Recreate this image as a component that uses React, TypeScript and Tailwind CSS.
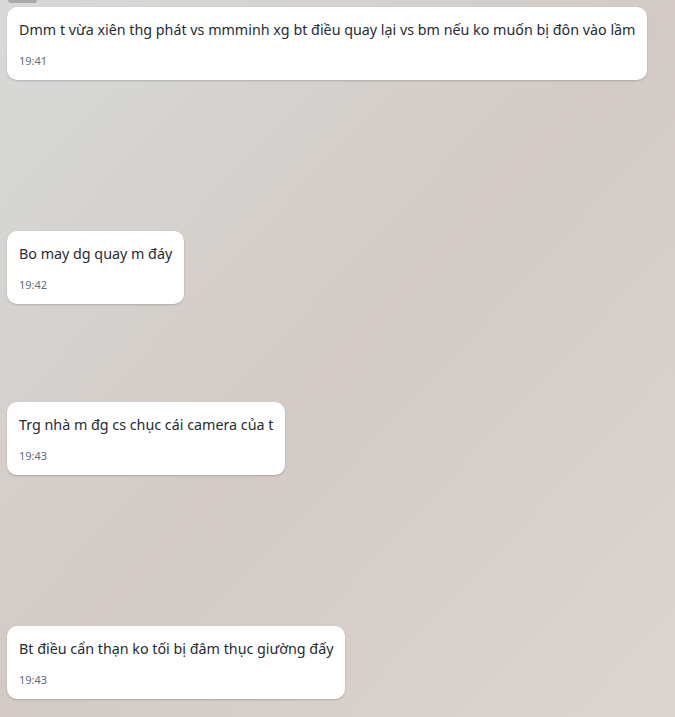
import React from "react";

type Message = {
  id: number;
  text: string;
  time: string;
  gap: string;
};

const messages: Message[] = [
  {
    id: 1,
    text: "Dmm t vừa xiên thg phát vs mmminh xg bt điều quay lại vs bm nếu ko muốn bị đôn vào lầm",
    time: "19:41",
    gap: "mt-[4px]",
  },
  { id: 2, text: "Bo may dg quay m đáy", time: "19:42", gap: "mt-[151px]" },
  {
    id: 3,
    text: "Trg nhà m đg cs chục cái camera của t",
    time: "19:43",
    gap: "mt-[98px]",
  },
  {
    id: 4,
    text: "Bt điều cẩn thạn ko tối bị đâm thục giường đấy",
    time: "19:43",
    gap: "mt-[151px]",
  },
];

function Bubble({ text, time, gap }: Message) {
  return (
    <div
      className={`${gap} self-start rounded-[10px] bg-white pl-3 pr-3 pt-3 pb-[11px] shadow-[0_1px_2px_rgba(0,0,0,0.18)]`}
    >
      <p className="text-[14.3px] leading-[22px] text-[#262b33] whitespace-nowrap">
        {text}
      </p>
      <p className="mt-3 text-[11px] leading-4 text-[#5c6c80]">{time}</p>
    </div>
  );
}

export default function App() {
  return (
    <main
      className="h-[717px] w-[675px] overflow-hidden bg-gradient-to-br from-[#d7dad8] via-[#d3cac5] to-[#ddd5cf]"
      style={{ fontFamily: '"Noto Sans", "Open Sans", sans-serif' }}
    >
      <div className="flex flex-col px-[7px]">
        {/* tail of the previous item, scrolled off the top */}
        <div className="ml-[1px] h-[3px] w-[29px] rounded-b-[6px] bg-[#a9abaa]" />
        {messages.map((m) => (
          <Bubble key={m.id} {...m} />
        ))}
      </div>
    </main>
  );
}
